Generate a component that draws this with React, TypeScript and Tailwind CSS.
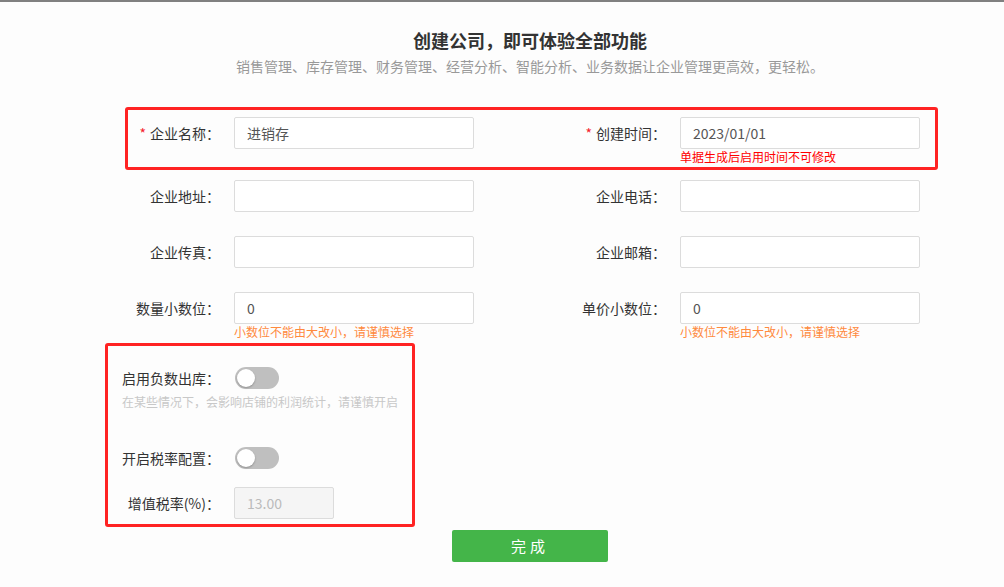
import React from 'react'

const FONT = "font-['Noto_Sans_CJK_SC','Noto_Sans',sans-serif]"

function Label({ text, required }: { text: string; required?: boolean }) {
    return (
        <div className="w-[120px] shrink-0 text-right text-[14px] leading-[32px] text-[#333]">
            {required && <span className="mr-[4px] text-[#f5222d]">*</span>}
            {text}
        </div>
    )
}

function TextInput({ value, disabled, width = 'w-[240px]' }: { value?: string; disabled?: boolean; width?: string }) {
    return (
        <div
            className={`${width} h-[32px] rounded-[2px] border border-[#dcdcdc] px-[12px] text-[14px] leading-[30px] ${disabled ? 'bg-[#f5f5f5] text-[#bbb]' : 'bg-white text-[#555]'}`}
        >
            {value}
        </div>
    )
}

function Field({
    label,
    value,
    required,
    hint,
    hintColor,
}: {
    label: string
    value?: string
    required?: boolean
    hint?: string
    hintColor?: string
}) {
    return (
        <div className="flex">
            <Label text={label} required={required} />
            <div className="ml-[14px]">
                <TextInput value={value} />
                {hint && <div className={`text-[12px] leading-[16px] ${hintColor}`}>{hint}</div>}
            </div>
        </div>
    )
}

function Toggle() {
    return (
        <div className="relative h-[22px] w-[44px] rounded-full bg-[#bfbfbf]">
            <div className="absolute left-[2px] top-[2px] h-[18px] w-[18px] rounded-full bg-white shadow-[0_1px_2px_rgba(0,0,0,0.25)]" />
        </div>
    )
}

export default function App() {
    const orange = 'text-[#ff8a3d]'

    return (
        <div className={`relative min-h-[587px] w-full bg-[#fdfdfd] ${FONT}`}>
            <div className="h-[2px] bg-[#808080]" />

            {/* Header */}
            <div className="flex flex-col items-center pl-[56px]">
                <h1 className="mt-[25px] text-[18px] font-bold leading-[26px] text-[#333]">创建公司，即可体验全部功能</h1>
                <p className="mt-[3px] text-[14px] leading-[20px] text-[#999]">
                    销售管理、库存管理、财务管理、经营分析、智能分析、业务数据让企业管理更高效，更轻松。
                </p>
            </div>

            {/* Form */}
            <div className="ml-[100px] w-[820px]">
                <div className="mt-[41px] grid grid-cols-2 gap-x-[72px]">
                    <Field label="企业名称：" value="进销存" required />
                    <Field
                        label="创建时间："
                        value="2023/01/01"
                        required
                        hint="单据生成后启用时间不可修改"
                        hintColor="text-[#f00]"
                    />
                </div>
                <div className="mt-[15px] grid grid-cols-2 gap-x-[72px]">
                    <Field label="企业地址：" />
                    <Field label="企业电话：" />
                </div>
                <div className="mt-[24px] grid grid-cols-2 gap-x-[72px]">
                    <Field label="企业传真：" />
                    <Field label="企业邮箱：" />
                </div>
                <div className="mt-[24px] grid grid-cols-2 gap-x-[72px]">
                    <Field label="数量小数位：" value="0" hint="小数位不能由大改小，请谨慎选择" hintColor={orange} />
                    <Field label="单价小数位：" value="0" hint="小数位不能由大改小，请谨慎选择" hintColor={orange} />
                </div>

                {/* Switches */}
                <div className="mt-[27px] flex h-[22px] items-center">
                    <div className="w-[120px] text-right text-[14px] text-[#333]">启用负数出库：</div>
                    <div className="ml-[15px]">
                        <Toggle />
                    </div>
                </div>
                <div className="ml-[22px] mt-[5px] text-[12px] leading-[16px] text-[#c8c8c8]">
                    在某些情况下，会影响店铺的利润统计，请谨慎开启
                </div>
                <div className="mt-[37px] flex h-[22px] items-center">
                    <div className="w-[120px] text-right text-[14px] text-[#333]">开启税率配置：</div>
                    <div className="ml-[15px]">
                        <Toggle />
                    </div>
                </div>
                <div className="mt-[18px] flex">
                    <Label text="增值税率(%)：" />
                    <div className="ml-[14px]">
                        <TextInput value="13.00" disabled width="w-[100px]" />
                    </div>
                </div>
            </div>

            <button className="ml-[452px] mt-[11px] h-[32px] w-[156px] rounded-[2px] bg-[#44b549] text-[15px] tracking-[4px] text-white">
                完成
            </button>

            {/* annotation boxes */}
            <div className="pointer-events-none absolute left-[125px] top-[107px] h-[63px] w-[813px] rounded-[3px] border-[3px] border-[#ff2323]" />
            <div className="pointer-events-none absolute left-[105px] top-[343px] h-[184px] w-[310px] rounded-[3px] border-[3px] border-[#ff2323]" />
        </div>
    )
}
